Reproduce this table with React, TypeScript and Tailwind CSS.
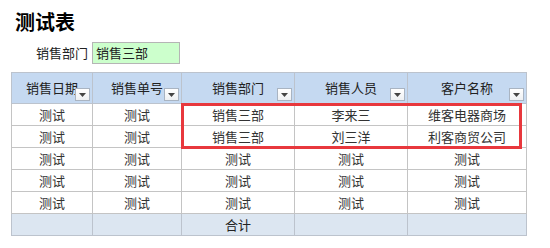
import React from 'react';

const columns = [
  { title: '销售日期', width: 'w-[81px]' },
  { title: '销售单号', width: 'w-[89px]' },
  { title: '销售部门', width: 'w-[113px]' },
  { title: '销售人员', width: 'w-[113px]' },
  { title: '客户名称', width: 'w-[119px]' },
];

const rows: string[][] = [
  ['测试', '测试', '销售三部', '李来三', '维客电器商场'],
  ['测试', '测试', '销售三部', '刘三洋', '利客商贸公司'],
  ['测试', '测试', '测试', '测试', '测试'],
  ['测试', '测试', '测试', '测试', '测试'],
  ['测试', '测试', '测试', '测试', '测试'],
];

const FilterButton: React.FC = () => (
  <span className="absolute right-[2px] bottom-[2px] flex h-[13px] w-[15px] items-center justify-center border border-[#a9b4c2] bg-gradient-to-b from-white to-[#eef0f3]">
    <svg width="7" height="4" viewBox="0 0 7 4">
      <path d="M0 0 L7 0 L3.5 4 Z" fill="#444" />
    </svg>
  </span>
);

export default function App() {
  return (
    <div
      className="h-[248px] w-[550px] bg-white text-[13px] text-[#222]"
      style={{ fontFamily: '"Noto Sans CJK SC", "Noto Sans", sans-serif' }}
    >
      <h1 className="pl-[15px] pt-[9px] text-[20px] font-bold leading-[26px] text-black">测试表</h1>
      <div className="mt-[7px] flex items-center">
        <span className="w-[92px] pr-[4px] text-right leading-[22px]">销售部门</span>
        <div className="h-[22px] w-[88px] border border-[#b5b5b5] bg-[#ccffcc] pl-[3px] leading-[20px]">销售三部</div>
      </div>
      <div className="relative ml-[11px] mt-[8px] w-[515px]">
        <table className="w-full table-fixed border-collapse">
          <thead>
            <tr className="h-[31px] bg-[#c5d9f1]">
              {columns.map((c) => (
                <th key={c.title} className={`${c.width} relative border border-[#bcc3cd] p-0 font-normal`}>
                  <span className="block pb-[1px] text-center">{c.title}</span>
                  <FilterButton />
                </th>
              ))}
            </tr>
          </thead>
          <tbody>
            {rows.map((r, i) => (
              <tr key={i} className="h-[22px]">
                {r.map((v, j) => (
                  <td key={j} className="border border-[#c4c4c4] p-0 text-center leading-[20px] text-[#333]">
                    {v}
                  </td>
                ))}
              </tr>
            ))}
            <tr className="h-[22px] bg-[#dce6f1]">
              <td className="border border-[#bcc3cd] p-0"></td>
              <td className="border border-[#bcc3cd] p-0"></td>
              <td className="border border-[#bcc3cd] p-0 text-center leading-[20px]">合计</td>
              <td className="border border-[#bcc3cd] p-0"></td>
              <td className="border border-[#bcc3cd] p-0"></td>
            </tr>
          </tbody>
        </table>
        <div className="pointer-events-none absolute left-[170px] top-[31px] h-[46px] w-[341px] border-[3px] border-[#e8383d]" />
      </div>
    </div>
  );
}
